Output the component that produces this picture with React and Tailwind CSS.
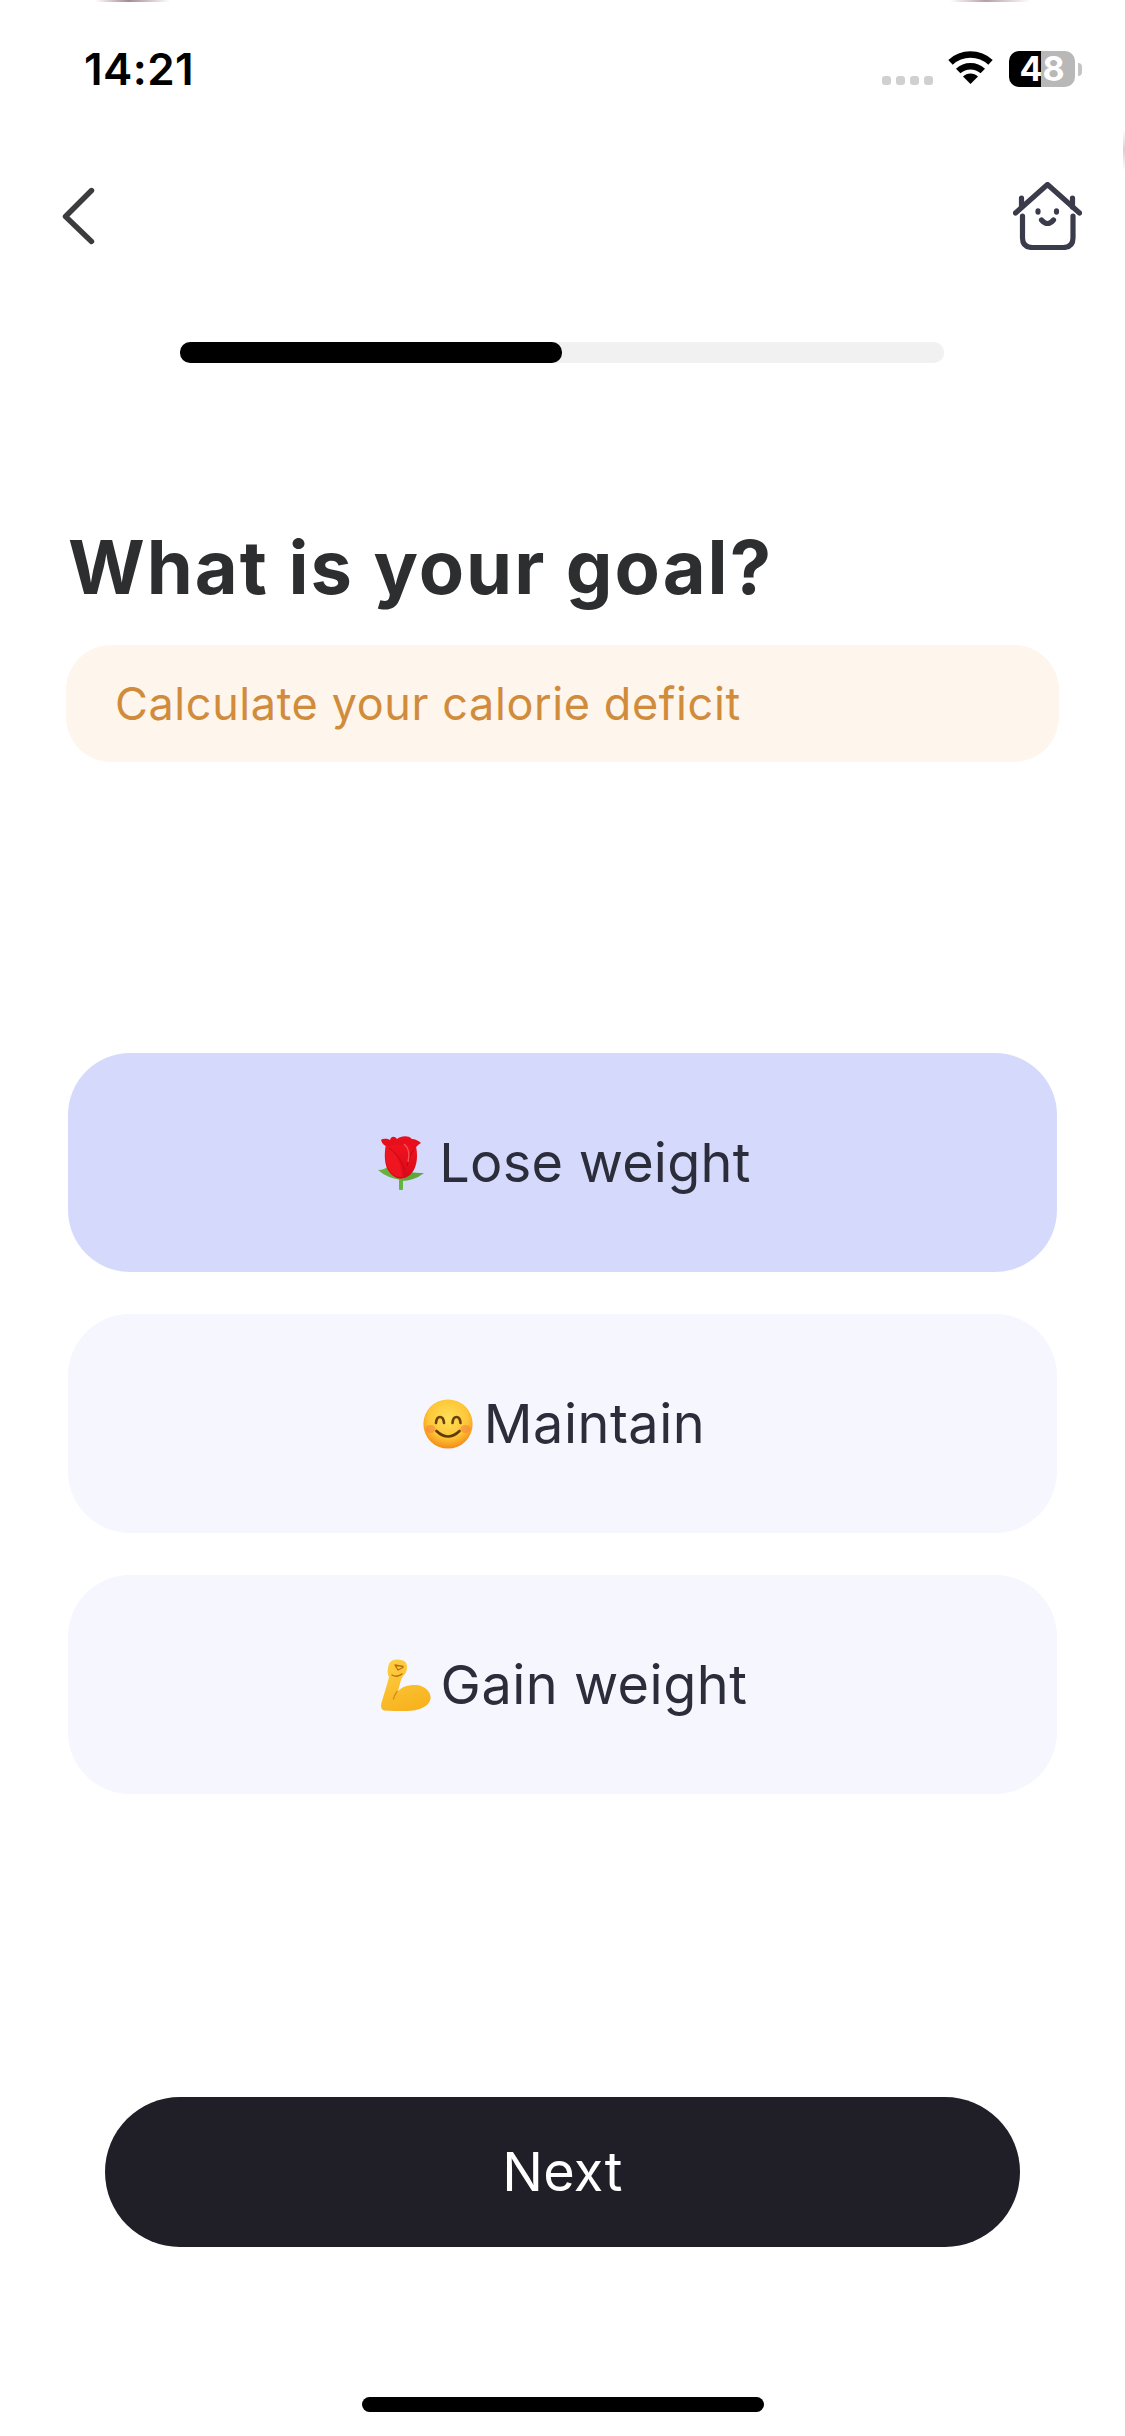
import React from "react";

function Wifi() {
  return (
    <svg className="block w-[45px] h-[34px]" viewBox="0 0 45 34" fill="none">
      <path d="M2.5 11.4A29.5 29.5 0 0 1 42.5 11.4" stroke="#000" strokeWidth="6.5" />
      <path d="M10.2 20A18 18 0 0 1 34.8 20" stroke="#000" strokeWidth="6.5" />
      <path d="M22.5 33L15 25.6A10.5 10.5 0 0 1 30 25.6Z" fill="#000" />
    </svg>
  );
}

function Back() {
  return (
    <svg className="block w-[34px] h-[58px]" viewBox="0 0 34 58" fill="none">
      <path d="M30.500 3.500L4.500 29.500L30.500 54.500" stroke="#3c3c3e" strokeWidth="5.400" strokeLinecap="round" strokeLinejoin="round" />
    </svg>
  );
}

function HomeFace() {
  return (
    <svg className="block w-[69px] h-[68px]" viewBox="0 0 69 68" fill="none" stroke="#3a3c4c" strokeWidth="5.200" strokeLinecap="round" strokeLinejoin="round">
      <path d="M2.500 31L34.500 2.500L66.500 31" />
      <path d="M8.500 16V25M59.500 16V25" />
      <path d="M9.500 34V56Q9.500 65.500 19.500 65.500H50Q60 65.500 60 56V34" />
      <ellipse cx="25" cy="29.500" rx="2.600" ry="3.300" fill="#3a3c4c" stroke="none" />
      <ellipse cx="43.500" cy="29.500" rx="2.600" ry="3.300" fill="#3a3c4c" stroke="none" />
      <path d="M28.500 38Q34.500 45 40.500 38" />
    </svg>
  );
}

function Rose() {
  return (
    <svg className="block w-[48px] h-[56px]" viewBox="18 15 48 56">
      <defs>
        <linearGradient id="roseBody" x1="0" y1="0" x2="0" y2="1">
          <stop offset="0" stopColor="#f0121e" />
          <stop offset="1" stopColor="#d90a18" />
        </linearGradient>
      </defs>
      <rect x="40" y="58" width="4" height="12" rx="1" fill="#63b53f" />
      <path d="M19 50Q26 50 29 46L26 37Q27 34 30 38L44 60Q29 59 19 50Z" fill="#66b23c" />
      <path d="M65 53Q56 53 52 52L42 61Q55 61 65 53Z" fill="#5da838" />
      <path d="M27 24C25 34 25 46 31 53C35 58 42 60 46 58C54 55 58 46 58 36C58 30 57 26 56 23Z" fill="url(#roseBody)" />
      <path d="M22 20C25 18 29 19 31 20C32 16 36 16 38 19C42 16 49 15 53 19C56 19 60 21 62 23C58 25 56 28 55 31C53 26 48 24 43 25C37 26 33 24 29 27C26 26 23 24 22 20Z" fill="#e80f1d" />
      <path d="M28 25C36 30 42 42 44 57C36 58 30 52 28 44C26 38 26 30 28 25Z" fill="#ee1420" />
      <path d="M48 46C50 38 52 32 55 30" stroke="#b50612" strokeWidth="1" fill="none" />
      <path d="M30 28C36 32 42 40 46 50" stroke="#c00814" strokeWidth="1" fill="none" />
      <path d="M45 24C50 28 51 34 49 42" stroke="#f5525a" strokeWidth="1.400" fill="none" />
    </svg>
  );
}

function Smile() {
  return (
    <svg className="block w-[50px] h-[50px]" viewBox="13 14 50 50">
      <defs>
        <radialGradient id="smileFace" cx="0.5" cy="0.38" r="0.62">
          <stop offset="0" stopColor="#ffdf58" />
          <stop offset="0.65" stopColor="#fdc636" />
          <stop offset="1" stopColor="#f48a18" />
        </radialGradient>
      </defs>
      <circle cx="38" cy="39" r="24.600" fill="url(#smileFace)" />
      <ellipse cx="20.500" cy="44" rx="5" ry="4" fill="#f9843f" opacity="0.6" />
      <ellipse cx="55.500" cy="44" rx="5" ry="4" fill="#f9843f" opacity="0.6" />
      <path d="M26 38Q26.500 32 30 32Q33.500 32 34 38M42.500 38Q43 32 46.500 32Q50 32 50.500 38" fill="none" stroke="#6a400e" strokeWidth="2.600" strokeLinecap="round" />
      <path d="M26.500 46Q38 57 49.500 46" fill="none" stroke="#5f380c" strokeWidth="2.600" strokeLinecap="round" />
    </svg>
  );
}

function Bicep() {
  return (
    <svg className="block w-[50px] h-[52px]" viewBox="12 9 50 52">
      <defs>
        <linearGradient id="armFill" x1="0" y1="0" x2="0.3" y2="1">
          <stop offset="0" stopColor="#ffd044" />
          <stop offset="1" stopColor="#f8b420" />
        </linearGradient>
      </defs>
      <path d="M20 14C22 9 29 8.500 34 10.500C39 12 39 20 36 24C34 26 33 27 32 30L29 41C33 36.500 40 34.500 48 35C56 36 62.500 42 61.500 49C60 57 49 61 38 61C30 61 22 61 15 60.500C11.500 59.500 11.500 55 13 51C15 44 18 35 20 27C18 24 18.500 18 20 14Z" fill="url(#armFill)" />
      <path d="M26 15L34 16.500M26 15L29 20M29 20L34 17.500M23 25Q28 28 33 24" fill="none" stroke="#b96a14" strokeWidth="1.300" strokeLinecap="round" />
      <path d="M24.500 49Q25.500 45 28 41.500" fill="none" stroke="#d98b17" strokeWidth="1.300" strokeLinecap="round" />
    </svg>
  );
}

function Option({ icon, label, selected, tracking }) {
  return (
    <div className={`h-[219px] rounded-[62px] pl-[3px] flex items-center justify-center ${selected ? "bg-[#d5dafc]" : "bg-[#f5f6fe]"}`}>
      {icon}
      <span className={`text-[54px] leading-none text-[#2c2d3a] ${tracking}`}>{label}</span>
    </div>
  );
}

export default function App() {
  return (
    <div className="relative w-[1125px] h-[2436px] overflow-hidden bg-white flex flex-col font-['Inter',sans-serif]">
      {/* glare of the device at the page edge */}
      <div className="absolute top-0 left-[95px] w-[75px] h-[2px] bg-[linear-gradient(90deg,#ffffff,#a58a95_45%,#ffffff)]" />
      <div className="absolute top-0 left-[950px] w-[80px] h-[2px] bg-[linear-gradient(90deg,#ffffff,#b79faa_45%,#ffffff)]" />
      <div className="absolute top-[130px] right-0 w-[2px] h-[40px] bg-[linear-gradient(180deg,#ffffff,#e2ccd0_50%,#ffffff)]" />
      {/* status bar */}
      <div className="mt-[51px] h-[36px] pl-[84px] pr-[43px] flex items-center justify-between">
        <span className="text-[44px] leading-none font-semibold text-black tracking-[0.4px]">14:21</span>
        <div className="flex items-end">
          <div className="flex gap-[5px] mb-[2px] mr-[15px]">
            <span className="w-[9px] h-[9px] rounded-[3px] bg-[#d0d0d0]" />
            <span className="w-[9px] h-[9px] rounded-[3px] bg-[#d0d0d0]" />
            <span className="w-[9px] h-[9px] rounded-[3px] bg-[#d0d0d0]" />
            <span className="w-[9px] h-[9px] rounded-[3px] bg-[#d0d0d0]" />
          </div>
          <div className="mr-[16px] mb-[2px]"><Wifi /></div>
          <div className="w-[66px] h-[36px] rounded-[10px] flex items-center justify-center text-[34px] leading-none font-bold text-white bg-[linear-gradient(90deg,#000_48.500%,#b8b8b8_48.500%)]">48</div>
          <div className="ml-[3px] mb-[11px] w-[4px] h-[13px] rounded-r-[4px] bg-[#c4c4c4]" />
        </div>
      </div>
      {/* nav */}
      <div className="mt-[95px] h-[68px] pl-[61px] pr-[43px] flex items-center justify-between">
        <Back />
        <HomeFace />
      </div>
      {/* progress */}
      <div className="mt-[92px] ml-[180px] w-[764px] h-[21px] rounded-[10px] bg-[#f1f1f1]">
        <div className="w-[382px] h-full rounded-[10px] bg-black" />
      </div>
      {/* title */}
      <h1 className="mt-[159px] ml-[68px] text-[74px] leading-[90px] font-bold text-[#2d2e30] tracking-[2px]">What is your goal?</h1>
      {/* hint */}
      <div className="mt-[33px] mx-[66px] h-[117px] rounded-[45px] bg-[#fef5ec] pl-[49px] flex items-center">
        <span className="text-[45px] leading-none text-[#d18c3b] tracking-[0.6px]">Calculate your calorie deficit</span>
      </div>
      {/* options */}
      <div className="mt-[291px] mx-[68px] flex flex-col gap-[42px]">
        <Option selected label="Lose weight" tracking="tracking-[0.25px]" icon={<span className="mr-[14px]"><Rose /></span>} />
        <Option label="Maintain" tracking="tracking-[0.5px]" icon={<span className="mr-[11px]"><Smile /></span>} />
        <Option label="Gain weight" tracking="tracking-[0.5px]" icon={<span className="mr-[10px]"><Bicep /></span>} />
      </div>
      {/* next */}
      <div className="mt-[303px] mx-[105px] h-[150px] rounded-[75px] bg-[#201e26] flex items-center justify-center">
        <span className="text-[54px] leading-none text-white tracking-[0.3px]">Next</span>
      </div>
      {/* home indicator */}
      <div className="mt-[150px] mx-auto w-[402px] h-[15px] rounded-[8px] bg-black" />
    </div>
  );
}
